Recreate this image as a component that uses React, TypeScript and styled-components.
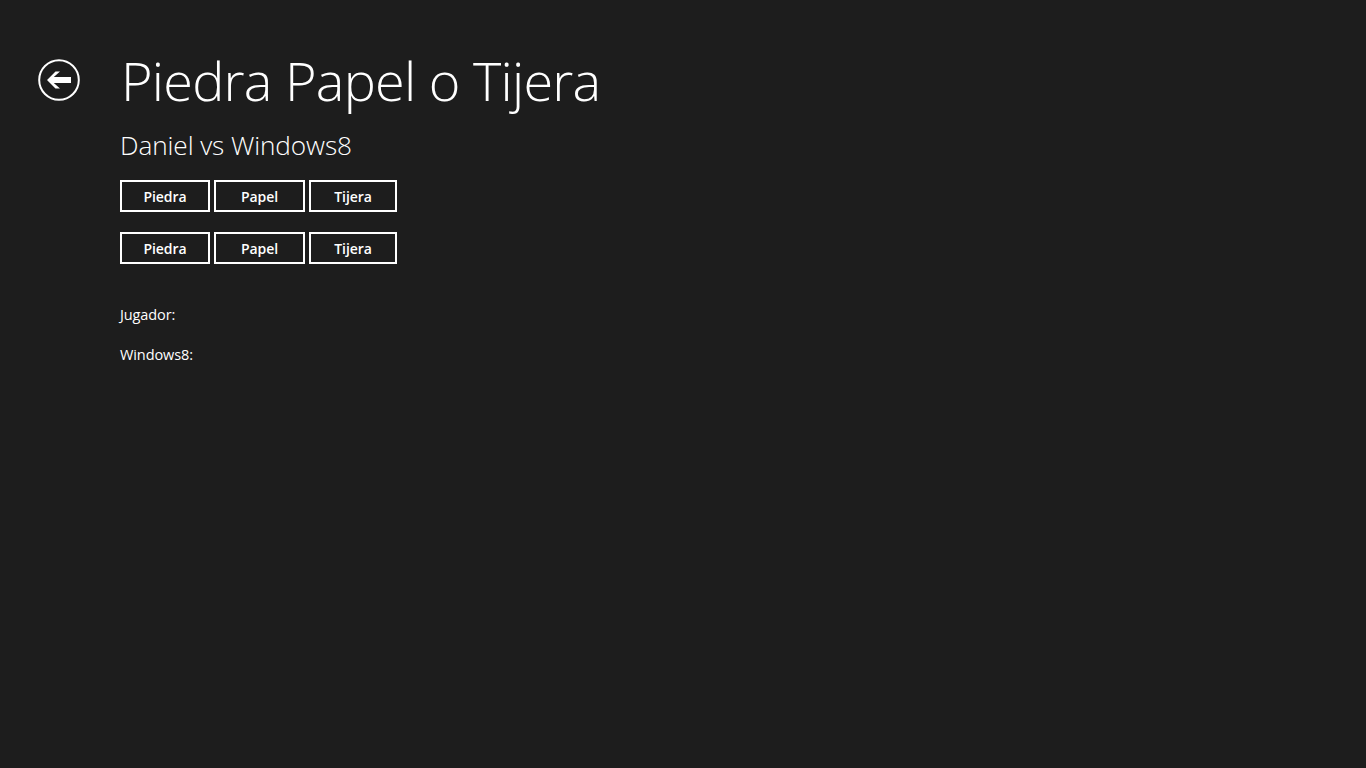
import React from "react";
import styled, { createGlobalStyle } from "styled-components";

const Global = createGlobalStyle`
  html, body { margin: 0; padding: 0; background: #1d1d1d; }
  body { font-family: "Open Sans", "Noto Sans", sans-serif; color: #ffffff; }
`;

const Page = styled.div`
  width: 1366px;
  height: 768px;
  background: #1d1d1d;
  display: flex;
  flex-direction: column;
  box-sizing: border-box;
  padding: 46px 0 0 38px;
`;

const Header = styled.div`
  display: flex;
  align-items: flex-start;
  gap: 41px;
`;

const BackButton = styled.button`
  width: 42px;
  height: 42px;
  margin-top: 13px;
  padding: 0;
  border: none;
  background: transparent;
  display: flex;
  cursor: pointer;
`;

const Title = styled.h1`
  margin: 0;
  font-family: "Open Sans", sans-serif;
  font-weight: 300;
  font-size: 54px;
  line-height: 68px;
  letter-spacing: -0.75px;
  color: #ffffff;
`;

const Content = styled.div`
  display: flex;
  flex-direction: column;
  padding-left: 82px;
`;

const Subtitle = styled.h2`
  margin: 14px 0 0 0;
  font-family: "Open Sans", sans-serif;
  font-weight: 300;
  font-size: 26.2px;
  line-height: 34px;
  letter-spacing: -0.1px;
  color: #ffffff;
`;

const ButtonRow = styled.div<{ $top: number }>`
  display: flex;
  gap: 4px;
  margin-top: ${(p) => p.$top}px;
`;

const ChoiceButton = styled.button<{ $w: number }>`
  width: ${(p) => p.$w}px;
  height: 32px;
  box-sizing: border-box;
  border: 2px solid #ffffff;
  background: transparent;
  color: #ffffff;
  font-family: "Open Sans", sans-serif;
  font-weight: 600;
  font-size: 14px;
  padding: 0;
  letter-spacing: -0.1px;
  cursor: pointer;
`;

const Label = styled.div<{ $top: number }>`
  margin-top: ${(p) => p.$top}px;
  font-family: "Open Sans", sans-serif;
  font-size: 14.5px;
  line-height: 20px;
  letter-spacing: -0.1px;
  color: #ffffff;
`;

const BackIcon = () => (
  <svg width="42" height="42" viewBox="0 0 42 42">
    <circle cx="21" cy="21" r="19.8" fill="none" stroke="#fff" strokeWidth="2" />
    <path d="M9 21 L17.5 12.5 L22 12.5 L15.8 18 L33 18 L33 24 L15.8 24 L22 29.5 L17.5 29.5 Z" fill="#fff" />
  </svg>
);

const choices = [
  { label: "Piedra", w: 90 },
  { label: "Papel", w: 91 },
  { label: "Tijera", w: 88 },
];

export default function App() {
  return (
    <>
      <Global />
      <Page>
        <Header>
          <BackButton aria-label="Atrás">
            <BackIcon />
          </BackButton>
          <Title>Piedra Papel o Tijera</Title>
        </Header>
        <Content>
          <Subtitle>Daniel vs Windows8</Subtitle>
          <ButtonRow $top={18}>
            {choices.map((c) => (
              <ChoiceButton key={c.label} $w={c.w}>{c.label}</ChoiceButton>
            ))}
          </ButtonRow>
          <ButtonRow $top={20}>
            {choices.map((c) => (
              <ChoiceButton key={c.label + "2"} $w={c.w}>{c.label}</ChoiceButton>
            ))}
          </ButtonRow>
          <Label $top={41}>Jugador:</Label>
          <Label $top={20}>Windows8:</Label>
        </Content>
      </Page>
    </>
  );
}
